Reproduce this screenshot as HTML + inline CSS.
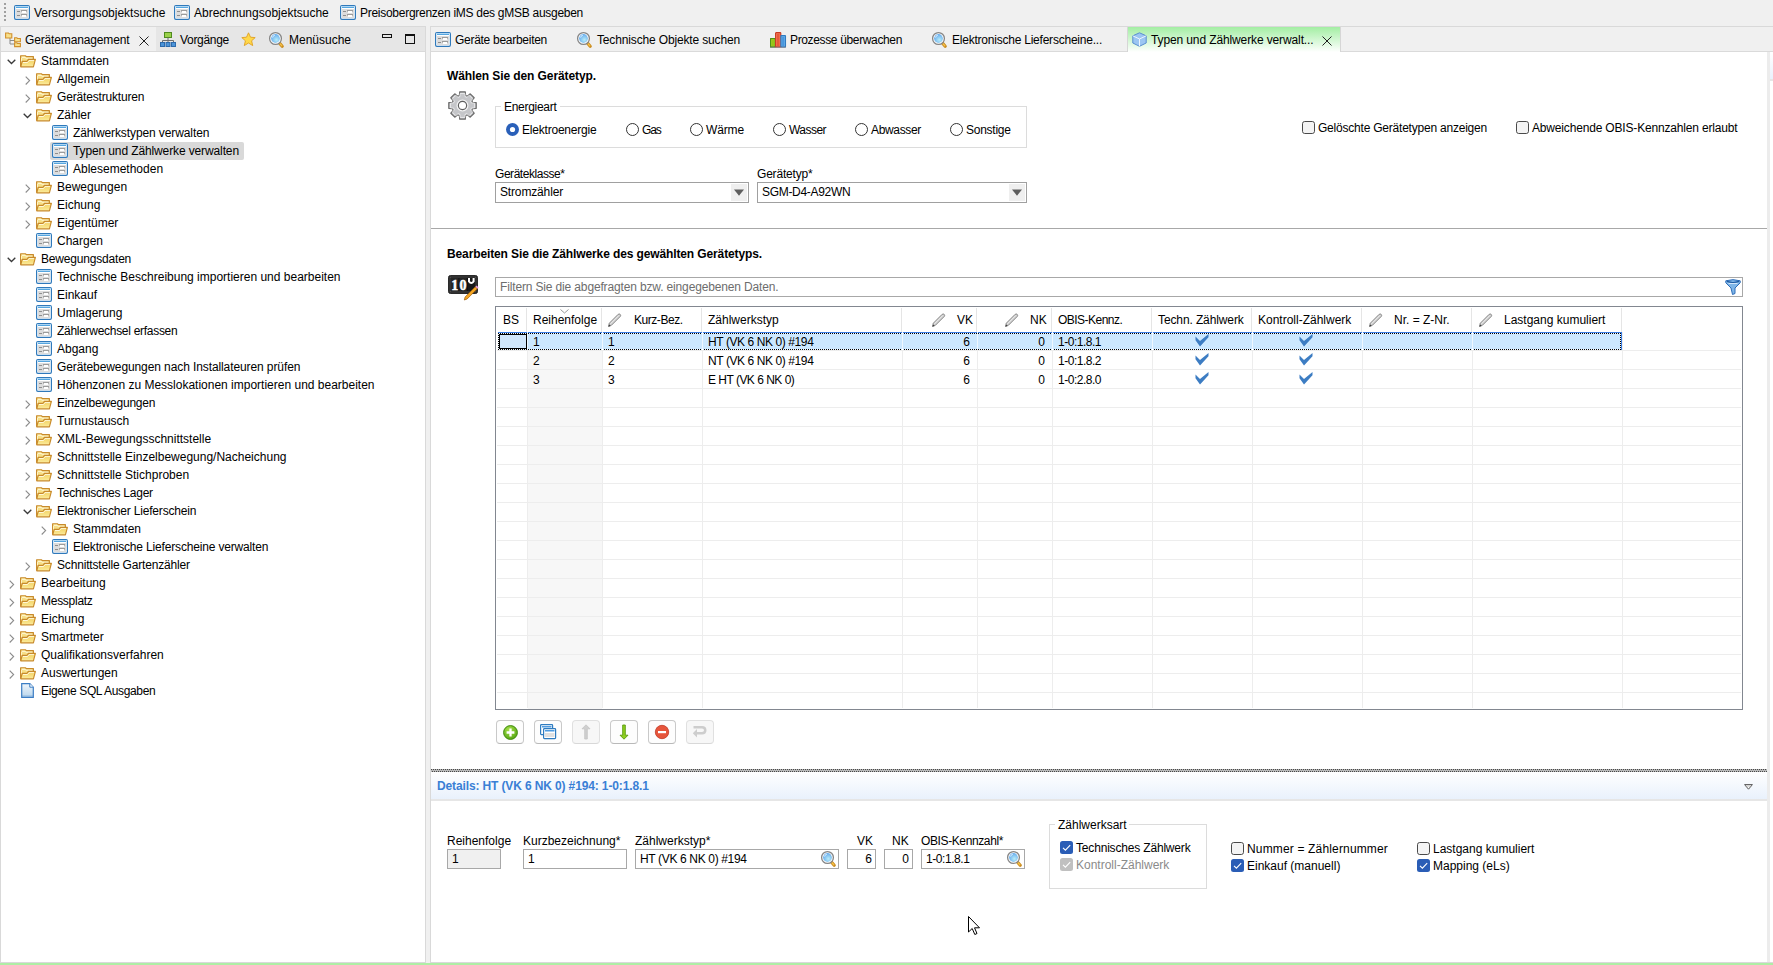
<!DOCTYPE html>
<html><head><meta charset="utf-8">
<style>
html,body{margin:0;padding:0;}
body{width:1773px;height:965px;overflow:hidden;position:relative;background:#f0f0f0;font-family:"Liberation Sans", sans-serif;font-size:12px;color:#000;}
.t{position:absolute;white-space:nowrap;line-height:14px;font-size:12px;}
svg{overflow:visible;}
</style></head><body>
<svg width="0" height="0" style="position:absolute">
<defs>
<g id="formi">
  <rect x="0.6" y="0.6" width="14.8" height="13.8" rx="1.3" fill="#fff" stroke="#2f79bb" stroke-width="1.2"/>
  <g shape-rendering="crispEdges">
  <rect x="1.2" y="1.2" width="13.6" height="1" fill="#aed6f3"/>
  <rect x="2" y="2" width="12" height="1" fill="#56a6df"/>
  <rect x="2" y="4" width="12" height="9" fill="#dcdcdc"/>
  <rect x="3" y="6" width="3" height="1" fill="#8e8e8e"/>
  <rect x="3" y="10" width="3" height="1" fill="#8e8e8e"/>
  <rect x="7" y="5" width="6" height="1" fill="#9c9c9c"/>
  <rect x="7" y="6" width="1" height="1" fill="#b5b5b5"/><rect x="12" y="6" width="1" height="1" fill="#b5b5b5"/>
  <rect x="8" y="6" width="4" height="2" fill="#fff"/>
  <rect x="7" y="9" width="6" height="1" fill="#9c9c9c"/>
  <rect x="7" y="10" width="1" height="1" fill="#b5b5b5"/><rect x="12" y="10" width="1" height="1" fill="#b5b5b5"/>
  <rect x="8" y="10" width="4" height="2" fill="#fff"/>
  </g>
</g>
<g id="foldi">
  <defs><linearGradient id="fg" x1="0" y1="0" x2="0" y2="1"><stop offset="0" stop-color="#f3cf5a"/><stop offset="1" stop-color="#fbec9e"/></linearGradient></defs>
  <path d="M0.6,11.8 L0.6,0.7 L5.4,0.7 L6.4,1.6 L13.4,1.6 L13.4,5" fill="#f7df86" stroke="#c88a2c" stroke-width="1.15" stroke-linejoin="round"/>
  <path d="M1.7,2.3 L5,2.3 L6,3.2 L12.3,3.2" fill="none" stroke="#fff9dc" stroke-width="1"/>
  <path d="M1.5,3 L1.5,10" stroke="#fff6c8" stroke-width="0.9"/>
  <path d="M0.8,11.8 L2.1,6.3 L7,6.3 L8.4,4.4 L15.4,4.4 L13.4,11.8 Z" fill="url(#fg)" stroke="#c88a2c" stroke-width="1.15" stroke-linejoin="round"/>
  <path d="M3,7.5 L7.5,7.5 L9,5.6 L14,5.6" fill="none" stroke="#fffbe4" stroke-width="0.9"/>
</g>
<g id="lensi">
  <defs><radialGradient id="lg" cx="0.6" cy="0.65" r="0.7"><stop offset="0" stop-color="#b8ecf8"/><stop offset="1" stop-color="#5fa6ec"/></radialGradient></defs>
  <path d="M10.6,11.2 L13.2,14.2" stroke="#c98a1c" stroke-width="3.2" stroke-linecap="round"/>
  <path d="M11,11.8 L12.8,13.8" stroke="#f6c24a" stroke-width="1.3" stroke-linecap="round"/>
  <circle cx="6.5" cy="6.5" r="5.9" fill="#fff" stroke="#858585" stroke-width="1.3"/>
  <circle cx="6.5" cy="6.5" r="4.4" fill="url(#lg)"/>
  <path d="M3.6,5.6 A3,3 0 0 1 6,3" fill="none" stroke="#e8f6ff" stroke-width="0.9"/>
</g>
<g id="penci">
  <path d="M1.5,13.5 L2.3,10.2 L11.2,1.3 Q12.2,0.5 13.2,1.4 Q14.1,2.4 13.3,3.4 L4.4,12.3 Z" fill="#cfcfcf" stroke="#7d7d7d" stroke-width="0.9" stroke-linejoin="round"/>
  <path d="M3.5,10.8 L11.8,2.5" stroke="#f2f2f2" stroke-width="0.9"/>
  <path d="M1.5,13.5 L2.1,11.4 L3.6,12.9 Z" fill="#3a3a3a"/>
</g>
<g id="checki">
  <path d="M0.5,2.5 L5,7 L13.5,0 L13.5,3.2 L5,12.5 L0.5,6.2 Z" fill="#3d7dc3"/>
</g>
</defs></svg>

<div style="position:absolute;left:4px;top:3px;width:2px;height:2px;background:#a0a0a0;"></div>
<div style="position:absolute;left:4px;top:7px;width:2px;height:2px;background:#a0a0a0;"></div>
<div style="position:absolute;left:4px;top:11px;width:2px;height:2px;background:#a0a0a0;"></div>
<div style="position:absolute;left:4px;top:15px;width:2px;height:2px;background:#a0a0a0;"></div>
<div style="position:absolute;left:4px;top:19px;width:2px;height:2px;background:#a0a0a0;"></div>
<svg style="position:absolute;left:14px;top:5px;" width="16" height="16" viewBox="0 0 16 16"><use href="#formi"/></svg>
<div class="t" style="left:34px;top:6px;">Versorgungsobjektsuche</div>
<svg style="position:absolute;left:174px;top:5px;" width="16" height="16" viewBox="0 0 16 16"><use href="#formi"/></svg>
<div class="t" style="left:194px;top:6px;">Abrechnungsobjektsuche</div>
<svg style="position:absolute;left:340px;top:5px;" width="16" height="16" viewBox="0 0 16 16"><use href="#formi"/></svg>
<div class="t" style="left:360px;top:6px;letter-spacing:-0.275px;">Preisobergrenzen iMS des gMSB ausgeben</div>
<div style="position:absolute;left:0px;top:26px;width:426px;height:937px;background:#fff;box-sizing:border-box;border:1px solid #d9d9d9;"></div>
<div style="position:absolute;left:1px;top:27px;width:424px;height:25px;background:#e6e6e6;"></div>
<div style="position:absolute;left:1px;top:27px;width:155px;height:25px;background:#f0f0f0;"></div>
<div style="position:absolute;left:1px;top:51px;width:424px;height:1px;background:#dadada;"></div>
<svg style="position:absolute;left:5px;top:32px;" width="17" height="16" viewBox="0 0 17 16"><path d="M5,6 L5,12 L10,12 M5,8.5 L10,8.5" fill="none" stroke="#8a8a8a" stroke-width="1"/>
<path d="M0.6,6 L0.6,1 L3.5,1 L4.3,1.8 L6.8,1.8 L6.8,6 Z" fill="#f8e08a" stroke="#d0902e" stroke-width="1.1"/>
<path d="M9.6,9.8 L9.6,5.8 L11.8,5.8 L12.5,6.5 L15.4,6.5 L15.4,9.8 Z" fill="#f8e08a" stroke="#d0902e" stroke-width="1.1"/>
<path d="M9.6,14.6 L9.6,10.8 L11.8,10.8 L12.5,11.5 L15.4,11.5 L15.4,14.6 Z" fill="#f8e08a" stroke="#d0902e" stroke-width="1.1"/></svg>
<div class="t" style="left:25px;top:33px;letter-spacing:-0.140px;">Gerätemanagement</div>
<svg style="position:absolute;left:139px;top:36px;" width="10" height="10" viewBox="0 0 10 10"><path d="M0.5,0.5 L9.5,9.5 M9.5,0.5 L0.5,9.5" stroke="#222" stroke-width="1"/></svg>
<svg style="position:absolute;left:160px;top:32px;" width="16" height="15" viewBox="0 0 16 15"><rect x="4.5" y="0.5" width="7" height="5" fill="#9ad14a" stroke="#4f8a1e" stroke-width="1"/>
<path d="M8,5.5 L8,8.5 M2.5,8.5 L13.5,8.5 M2.5,8.5 L2.5,10 M8,8.5 L8,10 M13.5,8.5 L13.5,10" stroke="#6f6f6f" stroke-width="1" fill="none"/>
<rect x="0.5" y="10.5" width="4" height="4" fill="#4c94d8" stroke="#2d6aab" stroke-width="1"/>
<rect x="6" y="10.5" width="4" height="4" fill="#4c94d8" stroke="#2d6aab" stroke-width="1"/>
<rect x="11.5" y="10.5" width="4" height="4" fill="#4c94d8" stroke="#2d6aab" stroke-width="1"/></svg>
<div class="t" style="left:180px;top:33px;letter-spacing:-0.299px;">Vorgänge</div>
<svg style="position:absolute;left:241px;top:32px;" width="15" height="15" viewBox="0 0 15 15"><path d="M7.5,0.8 L9.5,5.2 L14.2,5.6 L10.6,8.8 L11.7,13.6 L7.5,11 L3.3,13.6 L4.4,8.8 L0.8,5.6 L5.5,5.2 Z" fill="#ffd84a" stroke="#e0a020" stroke-width="0.9" stroke-linejoin="round"/></svg>
<svg style="position:absolute;left:269px;top:32px;" width="16" height="16" viewBox="0 0 16 16"><use href="#lensi"/></svg>
<div class="t" style="left:289px;top:33px;">Menüsuche</div>
<div style="position:absolute;left:382px;top:34px;width:10px;height:4px;box-sizing:border-box;border:1.5px solid #111;"></div>
<div style="position:absolute;left:405px;top:34px;width:10px;height:10px;box-sizing:border-box;border:1.5px solid #111;border-top-width:2.5px;"></div>
<svg style="position:absolute;left:7px;top:59px;" width="10" height="6" viewBox="0 0 10 6"><polyline points="0.7,0.7 4.5,4.5 8.3,0.7" fill="none" stroke="#3a3a3a" stroke-width="1.3"/></svg>
<svg style="position:absolute;left:20px;top:55px;" width="16" height="13" viewBox="0 0 16 13"><use href="#foldi"/></svg>
<div class="t" style="left:41px;top:54px;">Stammdaten</div>
<svg style="position:absolute;left:25px;top:76px;" width="6" height="10" viewBox="0 0 6 10"><polyline points="0.7,0.7 4.6,4.6 0.7,8.5" fill="none" stroke="#8c8c8c" stroke-width="1.15"/></svg>
<svg style="position:absolute;left:36px;top:73px;" width="16" height="13" viewBox="0 0 16 13"><use href="#foldi"/></svg>
<div class="t" style="left:57px;top:72px;">Allgemein</div>
<svg style="position:absolute;left:25px;top:94px;" width="6" height="10" viewBox="0 0 6 10"><polyline points="0.7,0.7 4.6,4.6 0.7,8.5" fill="none" stroke="#8c8c8c" stroke-width="1.15"/></svg>
<svg style="position:absolute;left:36px;top:91px;" width="16" height="13" viewBox="0 0 16 13"><use href="#foldi"/></svg>
<div class="t" style="left:57px;top:90px;letter-spacing:-0.172px;">Gerätestrukturen</div>
<svg style="position:absolute;left:23px;top:113px;" width="10" height="6" viewBox="0 0 10 6"><polyline points="0.7,0.7 4.5,4.5 8.3,0.7" fill="none" stroke="#3a3a3a" stroke-width="1.3"/></svg>
<svg style="position:absolute;left:36px;top:109px;" width="16" height="13" viewBox="0 0 16 13"><use href="#foldi"/></svg>
<div class="t" style="left:57px;top:108px;">Zähler</div>
<svg style="position:absolute;left:52px;top:125px;" width="16" height="16" viewBox="0 0 16 16"><use href="#formi"/></svg>
<div class="t" style="left:73px;top:126px;letter-spacing:-0.101px;">Zählwerkstypen verwalten</div>
<div style="position:absolute;left:50px;top:142px;width:194px;height:18px;background:#d9d9d9;border-radius:2px;"></div>
<svg style="position:absolute;left:52px;top:143px;" width="16" height="16" viewBox="0 0 16 16"><use href="#formi"/></svg>
<div class="t" style="left:73px;top:144px;letter-spacing:-0.119px;">Typen und Zählwerke verwalten</div>
<svg style="position:absolute;left:52px;top:161px;" width="16" height="16" viewBox="0 0 16 16"><use href="#formi"/></svg>
<div class="t" style="left:73px;top:162px;">Ablesemethoden</div>
<svg style="position:absolute;left:25px;top:184px;" width="6" height="10" viewBox="0 0 6 10"><polyline points="0.7,0.7 4.6,4.6 0.7,8.5" fill="none" stroke="#8c8c8c" stroke-width="1.15"/></svg>
<svg style="position:absolute;left:36px;top:181px;" width="16" height="13" viewBox="0 0 16 13"><use href="#foldi"/></svg>
<div class="t" style="left:57px;top:180px;">Bewegungen</div>
<svg style="position:absolute;left:25px;top:202px;" width="6" height="10" viewBox="0 0 6 10"><polyline points="0.7,0.7 4.6,4.6 0.7,8.5" fill="none" stroke="#8c8c8c" stroke-width="1.15"/></svg>
<svg style="position:absolute;left:36px;top:199px;" width="16" height="13" viewBox="0 0 16 13"><use href="#foldi"/></svg>
<div class="t" style="left:57px;top:198px;">Eichung</div>
<svg style="position:absolute;left:25px;top:220px;" width="6" height="10" viewBox="0 0 6 10"><polyline points="0.7,0.7 4.6,4.6 0.7,8.5" fill="none" stroke="#8c8c8c" stroke-width="1.15"/></svg>
<svg style="position:absolute;left:36px;top:217px;" width="16" height="13" viewBox="0 0 16 13"><use href="#foldi"/></svg>
<div class="t" style="left:57px;top:216px;">Eigentümer</div>
<svg style="position:absolute;left:36px;top:233px;" width="16" height="16" viewBox="0 0 16 16"><use href="#formi"/></svg>
<div class="t" style="left:57px;top:234px;">Chargen</div>
<svg style="position:absolute;left:7px;top:257px;" width="10" height="6" viewBox="0 0 10 6"><polyline points="0.7,0.7 4.5,4.5 8.3,0.7" fill="none" stroke="#3a3a3a" stroke-width="1.3"/></svg>
<svg style="position:absolute;left:20px;top:253px;" width="16" height="13" viewBox="0 0 16 13"><use href="#foldi"/></svg>
<div class="t" style="left:41px;top:252px;letter-spacing:-0.189px;">Bewegungsdaten</div>
<svg style="position:absolute;left:36px;top:269px;" width="16" height="16" viewBox="0 0 16 16"><use href="#formi"/></svg>
<div class="t" style="left:57px;top:270px;">Technische Beschreibung importieren und bearbeiten</div>
<svg style="position:absolute;left:36px;top:287px;" width="16" height="16" viewBox="0 0 16 16"><use href="#formi"/></svg>
<div class="t" style="left:57px;top:288px;">Einkauf</div>
<svg style="position:absolute;left:36px;top:305px;" width="16" height="16" viewBox="0 0 16 16"><use href="#formi"/></svg>
<div class="t" style="left:57px;top:306px;">Umlagerung</div>
<svg style="position:absolute;left:36px;top:323px;" width="16" height="16" viewBox="0 0 16 16"><use href="#formi"/></svg>
<div class="t" style="left:57px;top:324px;letter-spacing:-0.288px;">Zählerwechsel erfassen</div>
<svg style="position:absolute;left:36px;top:341px;" width="16" height="16" viewBox="0 0 16 16"><use href="#formi"/></svg>
<div class="t" style="left:57px;top:342px;">Abgang</div>
<svg style="position:absolute;left:36px;top:359px;" width="16" height="16" viewBox="0 0 16 16"><use href="#formi"/></svg>
<div class="t" style="left:57px;top:360px;letter-spacing:-0.098px;">Gerätebewegungen nach Installateuren prüfen</div>
<svg style="position:absolute;left:36px;top:377px;" width="16" height="16" viewBox="0 0 16 16"><use href="#formi"/></svg>
<div class="t" style="left:57px;top:378px;">Höhenzonen zu Messlokationen importieren und bearbeiten</div>
<svg style="position:absolute;left:25px;top:400px;" width="6" height="10" viewBox="0 0 6 10"><polyline points="0.7,0.7 4.6,4.6 0.7,8.5" fill="none" stroke="#8c8c8c" stroke-width="1.15"/></svg>
<svg style="position:absolute;left:36px;top:397px;" width="16" height="13" viewBox="0 0 16 13"><use href="#foldi"/></svg>
<div class="t" style="left:57px;top:396px;letter-spacing:-0.195px;">Einzelbewegungen</div>
<svg style="position:absolute;left:25px;top:418px;" width="6" height="10" viewBox="0 0 6 10"><polyline points="0.7,0.7 4.6,4.6 0.7,8.5" fill="none" stroke="#8c8c8c" stroke-width="1.15"/></svg>
<svg style="position:absolute;left:36px;top:415px;" width="16" height="13" viewBox="0 0 16 13"><use href="#foldi"/></svg>
<div class="t" style="left:57px;top:414px;">Turnustausch</div>
<svg style="position:absolute;left:25px;top:436px;" width="6" height="10" viewBox="0 0 6 10"><polyline points="0.7,0.7 4.6,4.6 0.7,8.5" fill="none" stroke="#8c8c8c" stroke-width="1.15"/></svg>
<svg style="position:absolute;left:36px;top:433px;" width="16" height="13" viewBox="0 0 16 13"><use href="#foldi"/></svg>
<div class="t" style="left:57px;top:432px;">XML-Bewegungsschnittstelle</div>
<svg style="position:absolute;left:25px;top:454px;" width="6" height="10" viewBox="0 0 6 10"><polyline points="0.7,0.7 4.6,4.6 0.7,8.5" fill="none" stroke="#8c8c8c" stroke-width="1.15"/></svg>
<svg style="position:absolute;left:36px;top:451px;" width="16" height="13" viewBox="0 0 16 13"><use href="#foldi"/></svg>
<div class="t" style="left:57px;top:450px;">Schnittstelle Einzelbewegung/Nacheichung</div>
<svg style="position:absolute;left:25px;top:472px;" width="6" height="10" viewBox="0 0 6 10"><polyline points="0.7,0.7 4.6,4.6 0.7,8.5" fill="none" stroke="#8c8c8c" stroke-width="1.15"/></svg>
<svg style="position:absolute;left:36px;top:469px;" width="16" height="13" viewBox="0 0 16 13"><use href="#foldi"/></svg>
<div class="t" style="left:57px;top:468px;">Schnittstelle Stichproben</div>
<svg style="position:absolute;left:25px;top:490px;" width="6" height="10" viewBox="0 0 6 10"><polyline points="0.7,0.7 4.6,4.6 0.7,8.5" fill="none" stroke="#8c8c8c" stroke-width="1.15"/></svg>
<svg style="position:absolute;left:36px;top:487px;" width="16" height="13" viewBox="0 0 16 13"><use href="#foldi"/></svg>
<div class="t" style="left:57px;top:486px;letter-spacing:-0.251px;">Technisches Lager</div>
<svg style="position:absolute;left:23px;top:509px;" width="10" height="6" viewBox="0 0 10 6"><polyline points="0.7,0.7 4.5,4.5 8.3,0.7" fill="none" stroke="#3a3a3a" stroke-width="1.3"/></svg>
<svg style="position:absolute;left:36px;top:505px;" width="16" height="13" viewBox="0 0 16 13"><use href="#foldi"/></svg>
<div class="t" style="left:57px;top:504px;letter-spacing:-0.177px;">Elektronischer Lieferschein</div>
<svg style="position:absolute;left:41px;top:526px;" width="6" height="10" viewBox="0 0 6 10"><polyline points="0.7,0.7 4.6,4.6 0.7,8.5" fill="none" stroke="#8c8c8c" stroke-width="1.15"/></svg>
<svg style="position:absolute;left:52px;top:523px;" width="16" height="13" viewBox="0 0 16 13"><use href="#foldi"/></svg>
<div class="t" style="left:73px;top:522px;">Stammdaten</div>
<svg style="position:absolute;left:52px;top:539px;" width="16" height="16" viewBox="0 0 16 16"><use href="#formi"/></svg>
<div class="t" style="left:73px;top:540px;letter-spacing:-0.166px;">Elektronische Lieferscheine verwalten</div>
<svg style="position:absolute;left:25px;top:562px;" width="6" height="10" viewBox="0 0 6 10"><polyline points="0.7,0.7 4.6,4.6 0.7,8.5" fill="none" stroke="#8c8c8c" stroke-width="1.15"/></svg>
<svg style="position:absolute;left:36px;top:559px;" width="16" height="13" viewBox="0 0 16 13"><use href="#foldi"/></svg>
<div class="t" style="left:57px;top:558px;letter-spacing:-0.177px;">Schnittstelle Gartenzähler</div>
<svg style="position:absolute;left:9px;top:580px;" width="6" height="10" viewBox="0 0 6 10"><polyline points="0.7,0.7 4.6,4.6 0.7,8.5" fill="none" stroke="#8c8c8c" stroke-width="1.15"/></svg>
<svg style="position:absolute;left:20px;top:577px;" width="16" height="13" viewBox="0 0 16 13"><use href="#foldi"/></svg>
<div class="t" style="left:41px;top:576px;">Bearbeitung</div>
<svg style="position:absolute;left:9px;top:598px;" width="6" height="10" viewBox="0 0 6 10"><polyline points="0.7,0.7 4.6,4.6 0.7,8.5" fill="none" stroke="#8c8c8c" stroke-width="1.15"/></svg>
<svg style="position:absolute;left:20px;top:595px;" width="16" height="13" viewBox="0 0 16 13"><use href="#foldi"/></svg>
<div class="t" style="left:41px;top:594px;letter-spacing:-0.270px;">Messplatz</div>
<svg style="position:absolute;left:9px;top:616px;" width="6" height="10" viewBox="0 0 6 10"><polyline points="0.7,0.7 4.6,4.6 0.7,8.5" fill="none" stroke="#8c8c8c" stroke-width="1.15"/></svg>
<svg style="position:absolute;left:20px;top:613px;" width="16" height="13" viewBox="0 0 16 13"><use href="#foldi"/></svg>
<div class="t" style="left:41px;top:612px;">Eichung</div>
<svg style="position:absolute;left:9px;top:634px;" width="6" height="10" viewBox="0 0 6 10"><polyline points="0.7,0.7 4.6,4.6 0.7,8.5" fill="none" stroke="#8c8c8c" stroke-width="1.15"/></svg>
<svg style="position:absolute;left:20px;top:631px;" width="16" height="13" viewBox="0 0 16 13"><use href="#foldi"/></svg>
<div class="t" style="left:41px;top:630px;">Smartmeter</div>
<svg style="position:absolute;left:9px;top:652px;" width="6" height="10" viewBox="0 0 6 10"><polyline points="0.7,0.7 4.6,4.6 0.7,8.5" fill="none" stroke="#8c8c8c" stroke-width="1.15"/></svg>
<svg style="position:absolute;left:20px;top:649px;" width="16" height="13" viewBox="0 0 16 13"><use href="#foldi"/></svg>
<div class="t" style="left:41px;top:648px;">Qualifikationsverfahren</div>
<svg style="position:absolute;left:9px;top:670px;" width="6" height="10" viewBox="0 0 6 10"><polyline points="0.7,0.7 4.6,4.6 0.7,8.5" fill="none" stroke="#8c8c8c" stroke-width="1.15"/></svg>
<svg style="position:absolute;left:20px;top:667px;" width="16" height="13" viewBox="0 0 16 13"><use href="#foldi"/></svg>
<div class="t" style="left:41px;top:666px;">Auswertungen</div>
<svg style="position:absolute;left:21px;top:683px;" width="13" height="15" viewBox="0 0 13 15"><defs><linearGradient id="dg" x1="0" y1="0" x2="0" y2="1"><stop offset="0" stop-color="#eef5fb"/><stop offset="0.8" stop-color="#c4dcef"/><stop offset="0.82" stop-color="#a9c9e6"/><stop offset="1" stop-color="#a9c9e6"/></linearGradient></defs><path d="M0.7,0.7 L8.8,0.7 L12.3,4.2 L12.3,14.3 L0.7,14.3 Z" fill="url(#dg)" stroke="#3b7dc4" stroke-width="1.2"/><path d="M8.8,0.7 L8.8,4.2 L12.3,4.2" fill="#fff" stroke="#3b7dc4" stroke-width="1"/></svg>
<div class="t" style="left:41px;top:684px;letter-spacing:-0.352px;">Eigene SQL Ausgaben</div>
<div style="position:absolute;left:430px;top:26px;width:1343px;height:937px;background:#fff;box-sizing:border-box;border:1px solid #d9d9d9;border-right:none;"></div>
<div style="position:absolute;left:431px;top:27px;width:1342px;height:24px;background:#f0f0f0;"></div>
<div style="position:absolute;left:431px;top:51px;width:1342px;height:1px;background:#dadada;"></div>
<svg style="position:absolute;left:435px;top:32px;" width="16" height="16" viewBox="0 0 16 16"><use href="#formi"/></svg>
<div class="t" style="left:455px;top:33px;letter-spacing:-0.278px;">Geräte bearbeiten</div>
<svg style="position:absolute;left:577px;top:32px;" width="16" height="16" viewBox="0 0 16 16"><use href="#lensi"/></svg>
<div class="t" style="left:597px;top:33px;letter-spacing:-0.151px;">Technische Objekte suchen</div>
<svg style="position:absolute;left:770px;top:32px;" width="16" height="16" viewBox="0 0 16 16"><rect x="0.6" y="6.6" width="4.6" height="8.4" fill="#a6d62a" stroke="#4a9010" stroke-width="1.1"/>
<rect x="1.8" y="7.8" width="2.2" height="6.2" fill="#98c418"/>
<rect x="5.6" y="0.6" width="5.2" height="14.4" rx="0.6" fill="#f47a5a" stroke="#c83a22" stroke-width="1.1"/>
<rect x="7" y="2" width="2.4" height="12" fill="#e85a3a"/>
<rect x="10.9" y="3.6" width="4.6" height="11.4" rx="0.5" fill="#6ab4ee" stroke="#2f7ac0" stroke-width="1.1"/>
<rect x="12.1" y="5" width="2.2" height="9" fill="#4a96dc"/>
<rect x="0" y="14.6" width="16" height="1.2" fill="#6a6a7a" opacity="0.6"/></svg>
<div class="t" style="left:790px;top:33px;letter-spacing:-0.354px;">Prozesse überwachen</div>
<svg style="position:absolute;left:932px;top:32px;" width="16" height="16" viewBox="0 0 16 16"><use href="#lensi"/></svg>
<div class="t" style="left:952px;top:33px;letter-spacing:-0.225px;">Elektronische Lieferscheine...</div>
<div style="position:absolute;left:1127px;top:27px;width:214px;height:25px;background:linear-gradient(#a3eea3,#ffffff);box-sizing:border-box;border-left:1px solid #d6d6d6;border-right:1px solid #d6d6d6;"></div>
<svg style="position:absolute;left:1132px;top:32px;" width="15" height="15" viewBox="0 0 15 15"><path d="M7.5,0.8 L14.2,3.8 L14.2,11 L7.5,14.3 L0.8,11 L0.8,3.8 Z" fill="#9cc6f2" stroke="#5a8fd0" stroke-width="1"/>
<path d="M0.8,3.8 L7.5,7 L14.2,3.8 M7.5,7 L7.5,14.3" fill="none" stroke="#eef6ff" stroke-width="1"/></svg>
<div class="t" style="left:1151px;top:33px;letter-spacing:-0.119px;">Typen und Zählwerke verwalt...</div>
<svg style="position:absolute;left:1322px;top:36px;" width="10" height="10" viewBox="0 0 10 10"><path d="M0.5,0.5 L9.5,9.5 M9.5,0.5 L0.5,9.5" stroke="#222" stroke-width="1"/></svg>
<div style="position:absolute;left:1767px;top:52px;width:3px;height:910px;background:#ececec;"></div>
<div style="position:absolute;left:1770px;top:52px;width:3px;height:27px;background:linear-gradient(#fff,#e9f1fc);"></div>
<div style="position:absolute;left:1770px;top:79px;width:3px;height:2px;background:#e6e6e6;"></div>
<div class="t" style="left:447px;top:69px;font-weight:bold;letter-spacing:-0.095px;">Wählen Sie den Gerätetyp.</div>
<svg style="position:absolute;left:448px;top:91px;" width="29" height="29" viewBox="0 0 29 29"><use href="#geari"/></svg>
<div style="position:absolute;left:495px;top:106px;width:532px;height:42px;box-sizing:border-box;border:1px solid #dcdcdc;"></div>
<div style="position:absolute;left:501px;top:100px;width:59px;height:14px;background:#fff;"></div>
<div class="t" style="left:504px;top:100px;letter-spacing:-0.287px;">Energieart</div>
<svg style="position:absolute;left:506px;top:123px;" width="13" height="13" viewBox="0 0 13 13"><circle cx="6.5" cy="6.5" r="6.5" fill="#2a60b9"/><circle cx="6.5" cy="6.5" r="2.6" fill="#fff"/></svg>
<div class="t" style="left:522px;top:123px;letter-spacing:-0.206px;">Elektroenergie</div>
<svg style="position:absolute;left:626px;top:123px;" width="13" height="13" viewBox="0 0 13 13"><circle cx="6.5" cy="6.5" r="6" fill="#fff" stroke="#333" stroke-width="1"/></svg>
<div class="t" style="left:642px;top:123px;letter-spacing:-1.072px;">Gas</div>
<svg style="position:absolute;left:690px;top:123px;" width="13" height="13" viewBox="0 0 13 13"><circle cx="6.5" cy="6.5" r="6" fill="#fff" stroke="#333" stroke-width="1"/></svg>
<div class="t" style="left:706px;top:123px;letter-spacing:-0.134px;">Wärme</div>
<svg style="position:absolute;left:773px;top:123px;" width="13" height="13" viewBox="0 0 13 13"><circle cx="6.5" cy="6.5" r="6" fill="#fff" stroke="#333" stroke-width="1"/></svg>
<div class="t" style="left:789px;top:123px;letter-spacing:-0.539px;">Wasser</div>
<svg style="position:absolute;left:855px;top:123px;" width="13" height="13" viewBox="0 0 13 13"><circle cx="6.5" cy="6.5" r="6" fill="#fff" stroke="#333" stroke-width="1"/></svg>
<div class="t" style="left:871px;top:123px;letter-spacing:-0.336px;">Abwasser</div>
<svg style="position:absolute;left:950px;top:123px;" width="13" height="13" viewBox="0 0 13 13"><circle cx="6.5" cy="6.5" r="6" fill="#fff" stroke="#333" stroke-width="1"/></svg>
<div class="t" style="left:966px;top:123px;letter-spacing:-0.250px;">Sonstige</div>
<svg style="position:absolute;left:1302px;top:121px;" width="13" height="13" viewBox="0 0 13 13"><rect x="0.5" y="0.5" width="12" height="12" rx="2.2" fill="#f4f4f4" stroke="#4a4a4a" stroke-width="1"/></svg>
<div class="t" style="left:1318px;top:121px;letter-spacing:-0.215px;">Gelöschte Gerätetypen anzeigen</div>
<svg style="position:absolute;left:1516px;top:121px;" width="13" height="13" viewBox="0 0 13 13"><rect x="0.5" y="0.5" width="12" height="12" rx="2.2" fill="#f4f4f4" stroke="#4a4a4a" stroke-width="1"/></svg>
<div class="t" style="left:1532px;top:121px;letter-spacing:-0.171px;">Abweichende OBIS-Kennzahlen erlaubt</div>
<div class="t" style="left:495px;top:167px;letter-spacing:-0.452px;">Geräteklasse*</div>
<div style="position:absolute;left:495px;top:182px;width:254px;height:21px;box-sizing:border-box;border:1px solid #a0a0a0;background:#fff;"></div>
<div class="t" style="left:500px;top:185px;letter-spacing:-0.153px;">Stromzähler</div>
<div style="position:absolute;left:731px;top:184px;width:16px;height:17px;background:#efefef;"></div>
<svg style="position:absolute;left:734px;top:189px;" width="10" height="7" viewBox="0 0 10 7"><path d="M0,0.5 L10,0.5 L5,6.8 Z" fill="#5e5e5e"/></svg>
<div class="t" style="left:757px;top:167px;letter-spacing:-0.198px;">Gerätetyp*</div>
<div style="position:absolute;left:757px;top:182px;width:270px;height:21px;box-sizing:border-box;border:1px solid #a0a0a0;background:#fff;"></div>
<div class="t" style="left:762px;top:185px;letter-spacing:-0.310px;">SGM-D4-A92WN</div>
<div style="position:absolute;left:1009px;top:184px;width:16px;height:17px;background:#efefef;"></div>
<svg style="position:absolute;left:1012px;top:189px;" width="10" height="7" viewBox="0 0 10 7"><path d="M0,0.5 L10,0.5 L5,6.8 Z" fill="#5e5e5e"/></svg>
<div style="position:absolute;left:431px;top:228px;width:1336px;height:1px;background:#a8a8a8;"></div>
<div class="t" style="left:447px;top:247px;font-weight:bold;letter-spacing:-0.120px;">Bearbeiten Sie die Zählwerke des gewählten Gerätetyps.</div>
<svg style="position:absolute;left:448px;top:275px;" width="31" height="26" viewBox="0 0 31 26"><rect x="0.5" y="0.5" width="29" height="18" rx="2" fill="#0c0c0c" stroke="#2a2a2a" stroke-width="1"/>
<rect x="2" y="2" width="26" height="15" fill="none" stroke="#7a7a7a" stroke-width="0.7"/>
<rect x="3" y="3" width="7.5" height="13" fill="#262626"/><rect x="11.3" y="3" width="7.5" height="13" fill="#262626"/><rect x="19.6" y="3" width="7.5" height="13" fill="#181818"/>
<text x="6.8" y="14.6" font-family="Liberation Serif" font-weight="bold" font-size="14" fill="#fff" stroke="#fff" stroke-width="0.5" text-anchor="middle">1</text>
<text x="15.1" y="14.6" font-family="Liberation Serif" font-weight="bold" font-size="14" fill="#fff" stroke="#fff" stroke-width="0.5" text-anchor="middle">0</text>
<path d="M21,3 L21,6.5 Q23.3,9.5 25.6,6.5 L25.6,3" fill="none" stroke="#fff" stroke-width="2"/>
<path d="M16.3,25 L17.1,22 L27.3,11.8 L29.3,13.8 L19.1,24 Z" fill="#f5a623" stroke="#9a5a08" stroke-width="0.7"/>
<path d="M27.3,11.8 L28.6,10.5 L30.6,12.5 L29.3,13.8 Z" fill="#e49ad8"/></svg>
<div style="position:absolute;left:495px;top:277px;width:1248px;height:20px;box-sizing:border-box;border:1px solid #a8a8a8;background:#fff;"></div>
<div class="t" style="left:500px;top:280px;color:#6d6d6d;letter-spacing:-0.148px;">Filtern Sie die abgefragten bzw. eingegebenen Daten.</div>
<svg style="position:absolute;left:1725px;top:279px;" width="16" height="16" viewBox="0 0 16 16"><path d="M0.8,1.8 Q8,-0.5 15.2,1.8 L15.2,3.8 L10,9 L10,14.5 L7.5,15.5 L6,9 L0.8,3.8 Z" fill="#7fb6e8" stroke="#2f6db8" stroke-width="1"/>
<path d="M2,2.4 Q8,4.6 14,2.4" fill="none" stroke="#1f5aa0" stroke-width="1.2"/>
<path d="M3.5,4.5 L12.5,4.5" stroke="#e8f4ff" stroke-width="0.8"/></svg>
<div style="position:absolute;left:495px;top:306px;width:1248px;height:404px;box-sizing:border-box;border:1px solid #828790;background:#fff;"></div>
<div style="position:absolute;left:528px;top:351px;width:74px;height:358px;background:#f7f7f7;"></div>
<div style="position:absolute;left:497px;top:369px;width:1244px;height:1px;background:#ededed;"></div>
<div style="position:absolute;left:497px;top:388px;width:1244px;height:1px;background:#ededed;"></div>
<div style="position:absolute;left:497px;top:407px;width:1244px;height:1px;background:#ededed;"></div>
<div style="position:absolute;left:497px;top:426px;width:1244px;height:1px;background:#ededed;"></div>
<div style="position:absolute;left:497px;top:445px;width:1244px;height:1px;background:#ededed;"></div>
<div style="position:absolute;left:497px;top:464px;width:1244px;height:1px;background:#ededed;"></div>
<div style="position:absolute;left:497px;top:483px;width:1244px;height:1px;background:#ededed;"></div>
<div style="position:absolute;left:497px;top:502px;width:1244px;height:1px;background:#ededed;"></div>
<div style="position:absolute;left:497px;top:521px;width:1244px;height:1px;background:#ededed;"></div>
<div style="position:absolute;left:497px;top:540px;width:1244px;height:1px;background:#ededed;"></div>
<div style="position:absolute;left:497px;top:559px;width:1244px;height:1px;background:#ededed;"></div>
<div style="position:absolute;left:497px;top:578px;width:1244px;height:1px;background:#ededed;"></div>
<div style="position:absolute;left:497px;top:597px;width:1244px;height:1px;background:#ededed;"></div>
<div style="position:absolute;left:497px;top:616px;width:1244px;height:1px;background:#ededed;"></div>
<div style="position:absolute;left:497px;top:635px;width:1244px;height:1px;background:#ededed;"></div>
<div style="position:absolute;left:497px;top:654px;width:1244px;height:1px;background:#ededed;"></div>
<div style="position:absolute;left:497px;top:673px;width:1244px;height:1px;background:#ededed;"></div>
<div style="position:absolute;left:497px;top:692px;width:1244px;height:1px;background:#ededed;"></div>
<div style="position:absolute;left:497px;top:350px;width:1244px;height:1px;background:#ededed;"></div>
<div style="position:absolute;left:526px;top:308px;width:1px;height:24px;background:#e5e5e5;"></div>
<div style="position:absolute;left:527px;top:351px;width:1px;height:357px;background:#ededed;"></div>
<div style="position:absolute;left:601px;top:308px;width:1px;height:24px;background:#e5e5e5;"></div>
<div style="position:absolute;left:602px;top:351px;width:1px;height:357px;background:#ededed;"></div>
<div style="position:absolute;left:701px;top:308px;width:1px;height:24px;background:#e5e5e5;"></div>
<div style="position:absolute;left:702px;top:351px;width:1px;height:357px;background:#ededed;"></div>
<div style="position:absolute;left:901px;top:308px;width:1px;height:24px;background:#e5e5e5;"></div>
<div style="position:absolute;left:902px;top:351px;width:1px;height:357px;background:#ededed;"></div>
<div style="position:absolute;left:976px;top:308px;width:1px;height:24px;background:#e5e5e5;"></div>
<div style="position:absolute;left:977px;top:351px;width:1px;height:357px;background:#ededed;"></div>
<div style="position:absolute;left:1051px;top:308px;width:1px;height:24px;background:#e5e5e5;"></div>
<div style="position:absolute;left:1052px;top:351px;width:1px;height:357px;background:#ededed;"></div>
<div style="position:absolute;left:1151px;top:308px;width:1px;height:24px;background:#e5e5e5;"></div>
<div style="position:absolute;left:1152px;top:351px;width:1px;height:357px;background:#ededed;"></div>
<div style="position:absolute;left:1251px;top:308px;width:1px;height:24px;background:#e5e5e5;"></div>
<div style="position:absolute;left:1252px;top:351px;width:1px;height:357px;background:#ededed;"></div>
<div style="position:absolute;left:1361px;top:308px;width:1px;height:24px;background:#e5e5e5;"></div>
<div style="position:absolute;left:1362px;top:351px;width:1px;height:357px;background:#ededed;"></div>
<div style="position:absolute;left:1471px;top:308px;width:1px;height:24px;background:#e5e5e5;"></div>
<div style="position:absolute;left:1472px;top:351px;width:1px;height:357px;background:#ededed;"></div>
<div style="position:absolute;left:1621px;top:308px;width:1px;height:24px;background:#e5e5e5;"></div>
<div style="position:absolute;left:1622px;top:351px;width:1px;height:357px;background:#ededed;"></div>
<div class="t" style="left:503px;top:313px;">BS</div>
<div class="t" style="left:533px;top:313px;">Reihenfolge</div>
<div class="t" style="left:634px;top:313px;letter-spacing:-0.454px;">Kurz-Bez.</div>
<div class="t" style="left:708px;top:313px;">Zählwerkstyp</div>
<div class="t" style="left:957px;top:313px;">VK</div>
<div class="t" style="left:1030px;top:313px;">NK</div>
<div class="t" style="left:1058px;top:313px;letter-spacing:-0.530px;">OBIS-Kennz.</div>
<div class="t" style="left:1158px;top:313px;letter-spacing:-0.112px;">Techn. Zählwerk</div>
<div class="t" style="left:1258px;top:313px;">Kontroll-Zählwerk</div>
<div class="t" style="left:1394px;top:313px;">Nr. = Z-Nr.</div>
<div class="t" style="left:1504px;top:313px;">Lastgang kumuliert</div>
<svg style="position:absolute;left:607px;top:313px;" width="15" height="15" viewBox="0 0 15 15"><use href="#penci"/></svg>
<svg style="position:absolute;left:931px;top:313px;" width="15" height="15" viewBox="0 0 15 15"><use href="#penci"/></svg>
<svg style="position:absolute;left:1004px;top:313px;" width="15" height="15" viewBox="0 0 15 15"><use href="#penci"/></svg>
<svg style="position:absolute;left:1368px;top:313px;" width="15" height="15" viewBox="0 0 15 15"><use href="#penci"/></svg>
<svg style="position:absolute;left:1478px;top:313px;" width="15" height="15" viewBox="0 0 15 15"><use href="#penci"/></svg>
<svg style="position:absolute;left:560px;top:309px;" width="9" height="5" viewBox="0 0 9 5"><polyline points="0.5,0.5 4.5,4 8.5,0.5" fill="none" stroke="#9a9a9a" stroke-width="1"/></svg>
<div style="position:absolute;left:498px;top:332px;width:1124px;height:18px;background:#cce8ff;"></div>
<div style="position:absolute;left:498px;top:332px;width:1124px;height:1px;background:#3b7fe6;"></div>
<div style="position:absolute;left:1621px;top:332px;width:1px;height:18px;background:#3b7fe6;"></div>
<div style="position:absolute;left:528px;top:333px;width:1093px;height:1px;background:repeating-linear-gradient(90deg,#000 0 1px,rgba(255,255,255,0.7) 1px 2px);"></div>
<div style="position:absolute;left:528px;top:349px;width:1093px;height:1px;background:repeating-linear-gradient(90deg,#000 0 1px,rgba(255,255,255,0.7) 1px 2px);"></div>
<div style="position:absolute;left:1620px;top:333px;width:1px;height:17px;background:repeating-linear-gradient(180deg,#000 0 1px,rgba(255,255,255,0.7) 1px 2px);"></div>
<div style="position:absolute;left:527px;top:332px;width:1px;height:18px;background:#eef7fe;"></div>
<div style="position:absolute;left:602px;top:332px;width:1px;height:18px;background:#eef7fe;"></div>
<div style="position:absolute;left:702px;top:332px;width:1px;height:18px;background:#eef7fe;"></div>
<div style="position:absolute;left:902px;top:332px;width:1px;height:18px;background:#eef7fe;"></div>
<div style="position:absolute;left:977px;top:332px;width:1px;height:18px;background:#eef7fe;"></div>
<div style="position:absolute;left:1052px;top:332px;width:1px;height:18px;background:#eef7fe;"></div>
<div style="position:absolute;left:1152px;top:332px;width:1px;height:18px;background:#eef7fe;"></div>
<div style="position:absolute;left:1252px;top:332px;width:1px;height:18px;background:#eef7fe;"></div>
<div style="position:absolute;left:1362px;top:332px;width:1px;height:18px;background:#eef7fe;"></div>
<div style="position:absolute;left:1472px;top:332px;width:1px;height:18px;background:#eef7fe;"></div>
<div style="position:absolute;left:1622px;top:332px;width:1px;height:19px;background:#ededed;"></div>
<div style="position:absolute;left:498px;top:333px;width:29px;height:1px;background:repeating-linear-gradient(90deg,#000 0 1px,rgba(255,255,255,0.7) 1px 2px);"></div>
<div style="position:absolute;left:498px;top:349px;width:29px;height:1px;background:repeating-linear-gradient(90deg,#000 0 1px,rgba(255,255,255,0.7) 1px 2px);"></div>
<div style="position:absolute;left:498px;top:333px;width:1px;height:17px;background:repeating-linear-gradient(180deg,#000 0 1px,rgba(255,255,255,0.7) 1px 2px);"></div>
<div style="position:absolute;left:499px;top:334px;width:28px;height:15px;box-sizing:border-box;border:1px solid #000;background:#d0e6fb;"></div>
<div class="t" style="left:533px;top:335px;">1</div>
<div class="t" style="left:608px;top:335px;">1</div>
<div class="t" style="left:708px;top:335px;letter-spacing:-0.409px;">HT (VK 6 NK 0) #194</div>
<div class="t" style="left:902px;width:68px;text-align:right;top:335px">6</div>
<div class="t" style="left:977px;width:68px;text-align:right;top:335px">0</div>
<div class="t" style="left:1058px;top:335px;letter-spacing:-0.486px;">1-0:1.8.1</div>
<svg style="position:absolute;left:1195px;top:334px;" width="15" height="13" viewBox="0 0 15 13"><use href="#checki"/></svg>
<svg style="position:absolute;left:1299px;top:334px;" width="15" height="13" viewBox="0 0 15 13"><use href="#checki"/></svg>
<div class="t" style="left:533px;top:354px;">2</div>
<div class="t" style="left:608px;top:354px;">2</div>
<div class="t" style="left:708px;top:354px;letter-spacing:-0.409px;">NT (VK 6 NK 0) #194</div>
<div class="t" style="left:902px;width:68px;text-align:right;top:354px">6</div>
<div class="t" style="left:977px;width:68px;text-align:right;top:354px">0</div>
<div class="t" style="left:1058px;top:354px;letter-spacing:-0.486px;">1-0:1.8.2</div>
<svg style="position:absolute;left:1195px;top:353px;" width="15" height="13" viewBox="0 0 15 13"><use href="#checki"/></svg>
<svg style="position:absolute;left:1299px;top:353px;" width="15" height="13" viewBox="0 0 15 13"><use href="#checki"/></svg>
<div class="t" style="left:533px;top:373px;">3</div>
<div class="t" style="left:608px;top:373px;">3</div>
<div class="t" style="left:708px;top:373px;letter-spacing:-0.512px;">E HT (VK 6 NK 0)</div>
<div class="t" style="left:902px;width:68px;text-align:right;top:373px">6</div>
<div class="t" style="left:977px;width:68px;text-align:right;top:373px">0</div>
<div class="t" style="left:1058px;top:373px;letter-spacing:-0.486px;">1-0:2.8.0</div>
<svg style="position:absolute;left:1195px;top:372px;" width="15" height="13" viewBox="0 0 15 13"><use href="#checki"/></svg>
<svg style="position:absolute;left:1299px;top:372px;" width="15" height="13" viewBox="0 0 15 13"><use href="#checki"/></svg>
<div style="position:absolute;left:496px;top:720px;width:28px;height:24px;box-sizing:border-box;border:1px solid #c9c9c9;border-bottom-color:#b9b9b9;border-radius:4px;background:#fdfdfd;"></div>
<div style="position:absolute;left:534px;top:720px;width:28px;height:24px;box-sizing:border-box;border:1px solid #c9c9c9;border-bottom-color:#b9b9b9;border-radius:4px;background:#fdfdfd;"></div>
<div style="position:absolute;left:572px;top:720px;width:28px;height:24px;box-sizing:border-box;border:1px solid #e0e0e0;border-bottom-color:#d8d8d8;border-radius:4px;background:#f7f7f7;"></div>
<div style="position:absolute;left:610px;top:720px;width:28px;height:24px;box-sizing:border-box;border:1px solid #c9c9c9;border-bottom-color:#b9b9b9;border-radius:4px;background:#fdfdfd;"></div>
<div style="position:absolute;left:648px;top:720px;width:28px;height:24px;box-sizing:border-box;border:1px solid #c9c9c9;border-bottom-color:#b9b9b9;border-radius:4px;background:#fdfdfd;"></div>
<div style="position:absolute;left:686px;top:720px;width:28px;height:24px;box-sizing:border-box;border:1px solid #e0e0e0;border-bottom-color:#d8d8d8;border-radius:4px;background:#f7f7f7;"></div>
<svg style="position:absolute;left:503px;top:725px;" width="15" height="15" viewBox="0 0 15 15"><defs><radialGradient id="pg" cx="0.4" cy="0.3" r="0.7"><stop offset="0" stop-color="#a6e04a"/><stop offset="1" stop-color="#58a814"/></radialGradient></defs><circle cx="7.5" cy="7.5" r="6.9" fill="url(#pg)" stroke="#3f8a0e" stroke-width="1"/><path d="M7.5,3.6 L7.5,11.4 M3.6,7.5 L11.4,7.5" stroke="#fff" stroke-width="2.3"/></svg>
<svg style="position:absolute;left:540px;top:724px;" width="16" height="15" viewBox="0 0 16 15"><rect x="0.6" y="0.6" width="12" height="10" rx="0.8" fill="#fff" stroke="#2f7cc0" stroke-width="1.2"/><rect x="2" y="2" width="9.5" height="1.5" fill="#4f9be0"/>
<rect x="3.6" y="4.6" width="12" height="10" rx="0.8" fill="#fff" stroke="#2f7cc0" stroke-width="1.2"/><rect x="5" y="6" width="9.5" height="1.5" fill="#4f9be0"/><rect x="5" y="9" width="9.5" height="4" fill="#e0e0e0"/></svg>
<svg style="position:absolute;left:581px;top:724px;" width="10" height="16" viewBox="0 0 10 16"><path d="M5,0.8 L9,4.8 L6.3,4.8 L6.3,15 L3.7,15 L3.7,4.8 L1,4.8 Z" fill="#cfcfcf" stroke="#c4c4c4" stroke-width="0.8"/></svg>
<svg style="position:absolute;left:619px;top:724px;" width="10" height="16" viewBox="0 0 10 16"><path d="M5,15.2 L9,11.2 L6.3,11.2 L6.3,1 L3.7,1 L3.7,11.2 L1,11.2 Z" fill="#8fcf1e" stroke="#5a9a10" stroke-width="0.9"/></svg>
<svg style="position:absolute;left:655px;top:725px;" width="14" height="14" viewBox="0 0 14 14"><circle cx="7" cy="7" r="6.7" fill="#e6553c" stroke="#c23a26" stroke-width="0.8"/><rect x="3" y="6" width="8" height="2.2" fill="#fff"/></svg>
<svg style="position:absolute;left:692px;top:724px;" width="16" height="16" viewBox="0 0 16 16"><path d="M1.5,2 L10,2 Q14.5,2 14.5,6.3 Q14.5,10.5 10,10.5 L5,10.5 L5,13.5 L0.8,9.2 L5,5 L5,8 L10,8 Q12,8 12,6.3 Q12,4.5 10,4.5 L1.5,4.5 Z" fill="#cdcdcd"/></svg>
<div style="position:absolute;left:431px;top:769px;width:1336px;height:3px;background:#b8b8b8;"></div>
<div style="position:absolute;left:431px;top:769px;width:1336px;height:1px;background:repeating-linear-gradient(90deg,#4a4a4a 0 1px,#b8b8b8 1px 2px);"></div>
<div style="position:absolute;left:431px;top:771px;width:1336px;height:1px;background:repeating-linear-gradient(90deg,#b8b8b8 0 1px,#4a4a4a 1px 2px);"></div>
<div style="position:absolute;left:431px;top:772px;width:1336px;height:27px;background:linear-gradient(#ffffff,#e9f1fc);"></div>
<div style="position:absolute;left:431px;top:799px;width:1336px;height:2px;background:#e6e6e6;"></div>
<div class="t" style="left:437px;top:779px;font-weight:bold;color:#3a7fd5;letter-spacing:-0.129px;">Details: HT (VK 6 NK 0) #194: 1-0:1.8.1</div>
<svg style="position:absolute;left:1744px;top:784px;" width="9" height="6" viewBox="0 0 9 6"><path d="M0.6,0.6 L8.4,0.6 L4.5,5.2 Z" fill="#fff" stroke="#555" stroke-width="1"/><path d="M1.5,2 L7.5,2" stroke="#aaa" stroke-width="0.8"/></svg>
<div class="t" style="left:447px;top:834px;">Reihenfolge</div>
<div style="position:absolute;left:447px;top:849px;width:54px;height:20px;box-sizing:border-box;border:1px solid #a8a8a8;background:#f0f0f0;"></div>
<div class="t" style="left:452px;top:852px;">1</div>
<div class="t" style="left:523px;top:834px;">Kurzbezeichnung*</div>
<div style="position:absolute;left:523px;top:849px;width:104px;height:20px;box-sizing:border-box;border:1px solid #a8a8a8;background:#fff;"></div>
<div class="t" style="left:528px;top:852px;">1</div>
<div class="t" style="left:635px;top:834px;">Zählwerkstyp*</div>
<div style="position:absolute;left:635px;top:849px;width:204px;height:20px;box-sizing:border-box;border:1px solid #a8a8a8;background:#fff;"></div>
<div class="t" style="left:640px;top:852px;letter-spacing:-0.346px;">HT (VK 6 NK 0) #194</div>
<svg style="position:absolute;left:821px;top:851px;" width="16" height="16" viewBox="0 0 16 16"><use href="#lensi"/></svg>
<div class="t" style="left:857px;top:834px;">VK</div>
<div style="position:absolute;left:847px;top:849px;width:29px;height:20px;box-sizing:border-box;border:1px solid #a8a8a8;background:#fff;"></div>
<div class="t" style="left:847px;width:25px;text-align:right;top:852px">6</div>
<div class="t" style="left:892px;top:834px;">NK</div>
<div style="position:absolute;left:884px;top:849px;width:29px;height:20px;box-sizing:border-box;border:1px solid #a8a8a8;background:#fff;"></div>
<div class="t" style="left:884px;width:25px;text-align:right;top:852px">0</div>
<div class="t" style="left:921px;top:834px;letter-spacing:-0.385px;">OBIS-Kennzahl*</div>
<div style="position:absolute;left:921px;top:849px;width:104px;height:20px;box-sizing:border-box;border:1px solid #a8a8a8;background:#fff;"></div>
<div class="t" style="left:926px;top:852px;letter-spacing:-0.442px;">1-0:1.8.1</div>
<svg style="position:absolute;left:1007px;top:851px;" width="16" height="16" viewBox="0 0 16 16"><use href="#lensi"/></svg>
<div style="position:absolute;left:1049px;top:824px;width:158px;height:65px;box-sizing:border-box;border:1px solid #dcdcdc;"></div>
<div style="position:absolute;left:1055px;top:818px;width:74px;height:14px;background:#fff;"></div>
<div class="t" style="left:1058px;top:818px;">Zählwerksart</div>
<svg style="position:absolute;left:1060px;top:841px;" width="13" height="13" viewBox="0 0 13 13"><rect x="0" y="0" width="13" height="13" rx="2.5" fill="#2a5db6"/><path d="M3,6.8 L5.4,9.2 L10.2,4.2" fill="none" stroke="#fff" stroke-width="1.1"/></svg>
<div class="t" style="left:1076px;top:841px;letter-spacing:-0.178px;">Technisches Zählwerk</div>
<svg style="position:absolute;left:1060px;top:858px;" width="13" height="13" viewBox="0 0 13 13"><rect x="0" y="0" width="13" height="13" rx="2.5" fill="#c0c0c0"/><path d="M3,6.8 L5.4,9.2 L10.2,4.2" fill="none" stroke="#fff" stroke-width="1.1"/></svg>
<div class="t" style="left:1076px;top:858px;color:#8a8a8a;">Kontroll-Zählwerk</div>
<svg style="position:absolute;left:1231px;top:842px;" width="13" height="13" viewBox="0 0 13 13"><rect x="0.5" y="0.5" width="12" height="12" rx="2.2" fill="#f4f4f4" stroke="#4a4a4a" stroke-width="1"/></svg>
<div class="t" style="left:1247px;top:842px;letter-spacing:0.157px;">Nummer = Zählernummer</div>
<svg style="position:absolute;left:1231px;top:859px;" width="13" height="13" viewBox="0 0 13 13"><rect x="0" y="0" width="13" height="13" rx="2.5" fill="#2a5db6"/><path d="M3,6.8 L5.4,9.2 L10.2,4.2" fill="none" stroke="#fff" stroke-width="1.1"/></svg>
<div class="t" style="left:1247px;top:859px;">Einkauf (manuell)</div>
<svg style="position:absolute;left:1417px;top:842px;" width="13" height="13" viewBox="0 0 13 13"><rect x="0.5" y="0.5" width="12" height="12" rx="2.2" fill="#f4f4f4" stroke="#4a4a4a" stroke-width="1"/></svg>
<div class="t" style="left:1433px;top:842px;">Lastgang kumuliert</div>
<svg style="position:absolute;left:1417px;top:859px;" width="13" height="13" viewBox="0 0 13 13"><rect x="0" y="0" width="13" height="13" rx="2.5" fill="#2a5db6"/><path d="M3,6.8 L5.4,9.2 L10.2,4.2" fill="none" stroke="#fff" stroke-width="1.1"/></svg>
<div class="t" style="left:1433px;top:859px;">Mapping (eLs)</div>
<svg style="position:absolute;left:968px;top:916px;" width="13" height="20" viewBox="0 0 13 20"><path d="M0.5,0.5 L0.5,16 L4.2,12.5 L6.8,18.5 L9,17.5 L6.5,11.8 L11.5,11.8 Z" fill="#fff" stroke="#000" stroke-width="1"/></svg>
<div style="position:absolute;left:0px;top:963px;width:1773px;height:2px;background:#aeeea5;"></div>
<svg width="0" height="0" style="position:absolute"><defs>
<g id="geari"><path d="M10.51,4.79 L11.40,4.47 L11.72,0.78 L17.28,0.78 L17.60,4.47 L18.49,4.79 L18.54,4.81 L19.40,5.21 L22.24,2.83 L26.17,6.76 L23.79,9.60 L24.19,10.46 L24.21,10.51 L24.53,11.40 L28.22,11.72 L28.22,17.28 L24.53,17.60 L24.21,18.49 L24.19,18.54 L23.79,19.40 L26.17,22.24 L22.24,26.17 L19.40,23.79 L18.54,24.19 L18.49,24.21 L17.60,24.53 L17.28,28.22 L11.72,28.22 L11.40,24.53 L10.51,24.21 L10.46,24.19 L9.60,23.79 L6.76,26.17 L2.83,22.24 L5.21,19.40 L4.81,18.54 L4.79,18.49 L4.47,17.60 L0.78,17.28 L0.78,11.72 L4.47,11.40 L4.79,10.51 L4.81,10.46 L5.21,9.60 L2.83,6.76 L6.76,2.83 L9.60,5.21 L10.46,4.81 Z" fill="#c5c6c9" stroke="#6b6b6b" stroke-width="1.2" stroke-linejoin="round"/><path d="M10.51,4.79 L11.40,4.47 L11.72,0.78 L17.28,0.78 L17.60,4.47 L18.49,4.79 L18.54,4.81 L19.40,5.21 L22.24,2.83 L26.17,6.76 L23.79,9.60 L24.19,10.46 L24.21,10.51 L24.53,11.40 L28.22,11.72 L28.22,17.28 L24.53,17.60 L24.21,18.49 L24.19,18.54 L23.79,19.40 L26.17,22.24 L22.24,26.17 L19.40,23.79 L18.54,24.19 L18.49,24.21 L17.60,24.53 L17.28,28.22 L11.72,28.22 L11.40,24.53 L10.51,24.21 L10.46,24.19 L9.60,23.79 L6.76,26.17 L2.83,22.24 L5.21,19.40 L4.81,18.54 L4.79,18.49 L4.47,17.60 L0.78,17.28 L0.78,11.72 L4.47,11.40 L4.79,10.51 L4.81,10.46 L5.21,9.60 L2.83,6.76 L6.76,2.83 L9.60,5.21 L10.46,4.81 Z" fill="none" stroke="#f2f2f3" stroke-width="0.9" transform="translate(14.5 14.5) scale(0.87) translate(-14.5 -14.5)"/><circle cx="14.5" cy="14.5" r="5.4" fill="none" stroke="#f4f4f4" stroke-width="1.1"/><circle cx="14.5" cy="14.5" r="4.1" fill="#fff" stroke="#5e5e5e" stroke-width="1.1"/></g></defs></svg>
</body></html>
